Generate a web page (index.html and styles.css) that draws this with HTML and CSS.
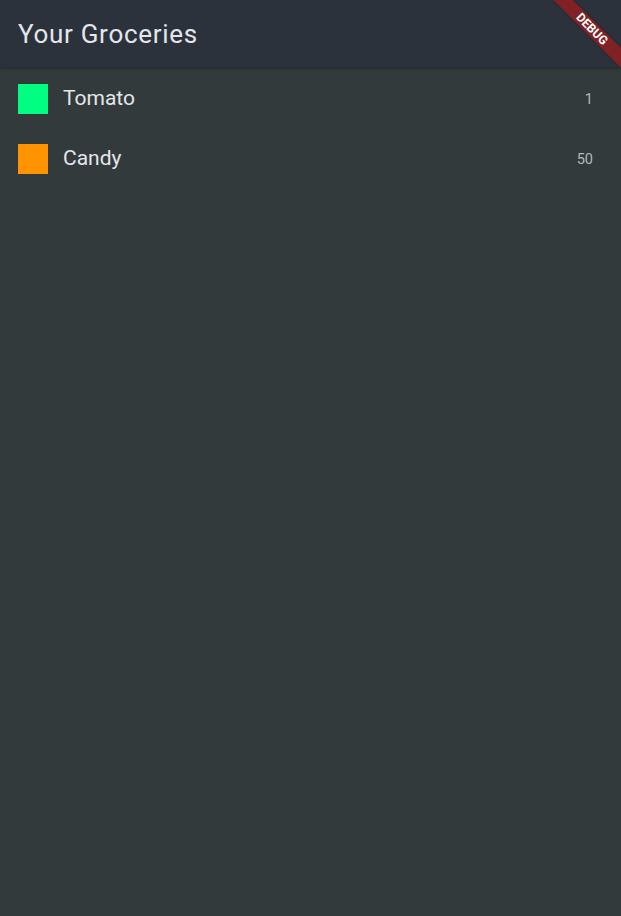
FILE: index.html
```html
<!DOCTYPE html>
<html>
<head>
<meta charset="utf-8">
<link rel="stylesheet" href="styles.css">
</head>
<body>
<div class="app">
  <header class="appbar">
    <h1 class="title">Your Groceries</h1>
    <div class="banner">DEBUG</div>
  </header>
  <ul class="list">
    <li class="item">
      <span class="swatch swatch-green"></span>
      <span class="name">Tomato</span>
      <span class="qty">1</span>
    </li>
    <li class="item">
      <span class="swatch swatch-orange"></span>
      <span class="name">Candy</span>
      <span class="qty">50</span>
    </li>
  </ul>
</div>
</body>
</html>
```
FILE: styles.css
```css
html, body {
  margin: 0;
  padding: 0;
  height: 100%;
}
body {
  background: #323a3b;
  font-family: Roboto, "Noto Sans", sans-serif;
  overflow: hidden;
}
.app {
  display: flex;
  flex-direction: column;
  height: 100%;
}
.appbar {
  position: relative;
  height: 67px;
  background: #2b323b;
  display: flex;
  align-items: center;
  padding: 0 18px;
  box-shadow: 0 1px 3px rgba(0,0,0,0.35);
  overflow: hidden;
  flex-shrink: 0;
  z-index: 1;
}
.title {
  margin: 0;
  font-size: 26px;
  font-weight: 400;
  color: #e3e6ea;
  letter-spacing: 0.7px;
}
.banner {
  position: absolute;
  left: 544px;
  top: 22px;
  width: 96px;
  height: 14px;
  background: #7f2125;
  color: #ffffff;
  font-size: 12.2px;
  font-weight: 700;
  line-height: 14px;
  text-align: center;
  transform: rotate(45deg);
  box-shadow: 0 0 2px rgba(0,0,0,0.4);
}
.list {
  list-style: none;
  margin: 0;
  padding: 2px 0 0;
}
.item {
  height: 60px;
  display: flex;
  align-items: center;
  padding: 0 28px 0 18px;
}
.swatch {
  width: 30px;
  height: 30px;
  flex-shrink: 0;
}
.swatch-green { background: #00ff80; }
.swatch-orange { background: #ff9400; }
.name {
  margin-left: 15px;
  flex: 1;
  font-size: 21px;
  line-height: 24px;
  padding-bottom: 3px;
  color: #e3e6ea;
}
.qty {
  font-size: 14.5px;
  color: #b3b8bc;
}
```
